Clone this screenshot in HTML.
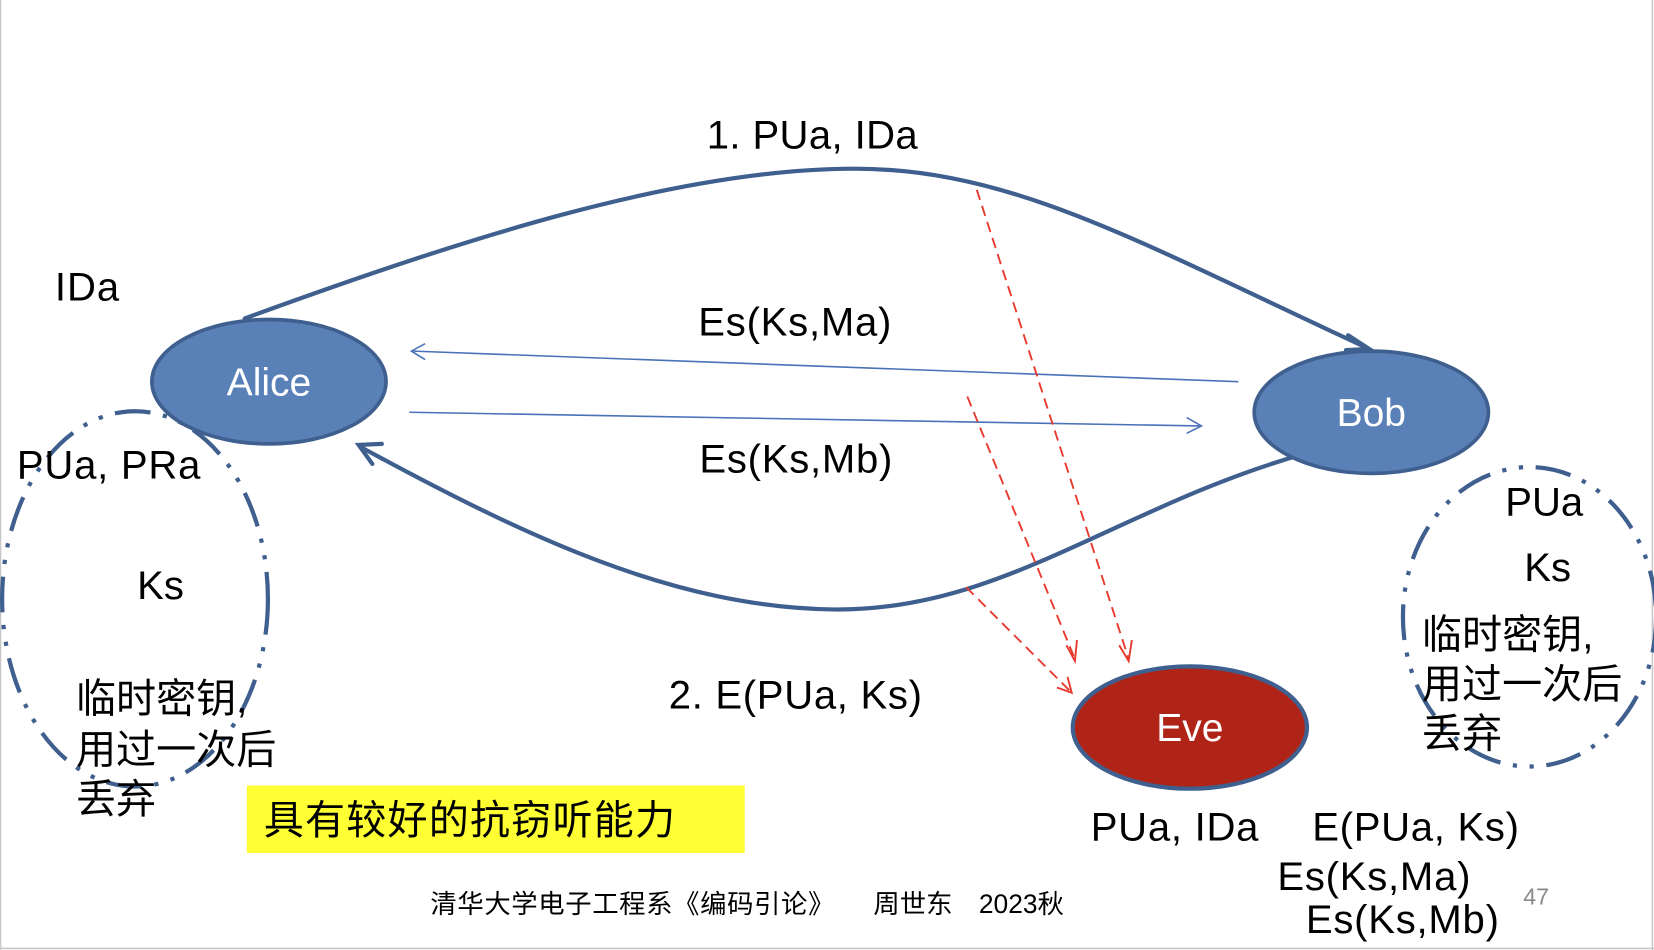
<!DOCTYPE html>
<html><head><meta charset="utf-8"><style>
html,body{margin:0;padding:0;background:#fff;}
svg{display:block;}
text{font-family:"Liberation Sans","Noto Sans CJK SC",sans-serif;}
</style></head><body>
<svg width="1654" height="950" viewBox="0 0 1568 901" preserveAspectRatio="none" xmlns="http://www.w3.org/2000/svg">
<rect x="0" y="0" width="1568" height="901" fill="#fff"/>
<line x1="0.5" y1="0" x2="0.5" y2="901" stroke="#c8c8c8" stroke-width="1.5"/>
<line x1="1566.5" y1="0" x2="1566.5" y2="901" stroke="#c8c8c8" stroke-width="1.5"/>
<line x1="0" y1="899.5" x2="1568" y2="899.5" stroke="#c8c8c8" stroke-width="1.5"/>

<g fill="none" stroke="#3f5f8f" stroke-width="4" stroke-dasharray="34 12 4 12 4 12">
<ellipse cx="128" cy="568" rx="126" ry="178"/>
<ellipse cx="1450" cy="585" rx="120" ry="142"/>
</g>

<g fill="none" stroke="#3f5f8f" stroke-width="4" stroke-linecap="round">
<path d="M232 302 C 430 230, 640 160, 810 160 C 960 160, 1080 230, 1296 330"/>
<path d="M1278 318 L1298 331 L1276 332"/>
<path d="M1238 430 C 1060 480, 950 580, 790 578 C 640 576, 500 510, 342 424"/>
<path d="M353 440 L340 422 L362 421"/>
</g>

<g fill="none" stroke="#4a72b8" stroke-width="1.5">
<path d="M1174 362 L392 333"/>
<path d="M403 326 L390 333 L403 341"/>
<path d="M388 391 L1138 404"/>
<path d="M1125 396 L1139 404 L1125 411"/>
</g>

<g fill="none" stroke="#e83a2e" stroke-width="1.8" stroke-dasharray="10 6">
<path d="M926 180 L1070 625"/>
<path d="M917 376 L1019 625"/>
<path d="M916 557 L1015 656"/>
</g>
<g fill="none" stroke="#e83a2e" stroke-width="1.8">
<path d="M1061 612 L1070 627 L1073 607"/>
<path d="M1011 612 L1019 627 L1021 607"/>
<path d="M1002 652 L1016 657 L1012 642"/>
</g>

<ellipse cx="255" cy="362" rx="111" ry="59" fill="#5a80b8" stroke="#3f5f8f" stroke-width="3.5"/>
<text x="255" y="375" font-size="37" fill="#fff" text-anchor="middle">Alice</text>
<ellipse cx="1300" cy="391" rx="111" ry="58" fill="#5a80b8" stroke="#3f5f8f" stroke-width="3.5"/>
<text x="1300" y="404" font-size="37" fill="#fff" text-anchor="middle">Bob</text>
<ellipse cx="1128" cy="690" rx="111" ry="58" fill="#b02418" stroke="#3f5f8f" stroke-width="4"/>
<text x="1128" y="703" font-size="37" fill="#fff" text-anchor="middle">Eve</text>

<g font-size="38" fill="#000">
<text x="670" y="141" textLength="200">1. PUa, IDa</text>
<text x="52" y="285" textLength="61">IDa</text>
<text x="662" y="318" textLength="183">Es(Ks,Ma)</text>
<text x="663" y="448" textLength="183">Es(Ks,Mb)</text>
<text x="16" y="454" textLength="174">PUa, PRa</text>
<text x="130" y="568">Ks</text>
<text x="634" y="672" textLength="240">2. E(PUa, Ks)</text>
<text x="1427" y="489">PUa</text>
<text x="1445" y="551">Ks</text>
<text x="1034" y="797" textLength="159">PUa, IDa</text>
<text x="1244" y="797" textLength="196">E(PUa, Ks)</text>
<text x="1211" y="844" textLength="183">Es(Ks,Ma)</text>
<text x="1238" y="885" textLength="183">Es(Ks,Mb)</text>
</g>
<g font-size="38" fill="#000">
<text x="72" y="676">临时密钥,</text>
<text x="72" y="724">用过一次后</text>
<text x="72" y="771">丢弃</text>
<text x="1348" y="615">临时密钥,</text>
<text x="1348" y="662">用过一次后</text>
<text x="1348" y="709">丢弃</text>
</g>

<rect x="234" y="745" width="472" height="64" fill="#ffff33"/>
<text x="250" y="791" font-size="38" fill="#000" textLength="390">具有较好的抗窃听能力</text>

<g font-size="25" fill="#000">
<text x="408" y="866" textLength="383">清华大学电子工程系《编码引论》</text>
<text x="828" y="866">周世东</text>
<text x="928" y="866">2023秋</text>
</g>
<text x="1444" y="858" font-size="22" fill="#8a8a8a">47</text>
</svg>
</body></html>
